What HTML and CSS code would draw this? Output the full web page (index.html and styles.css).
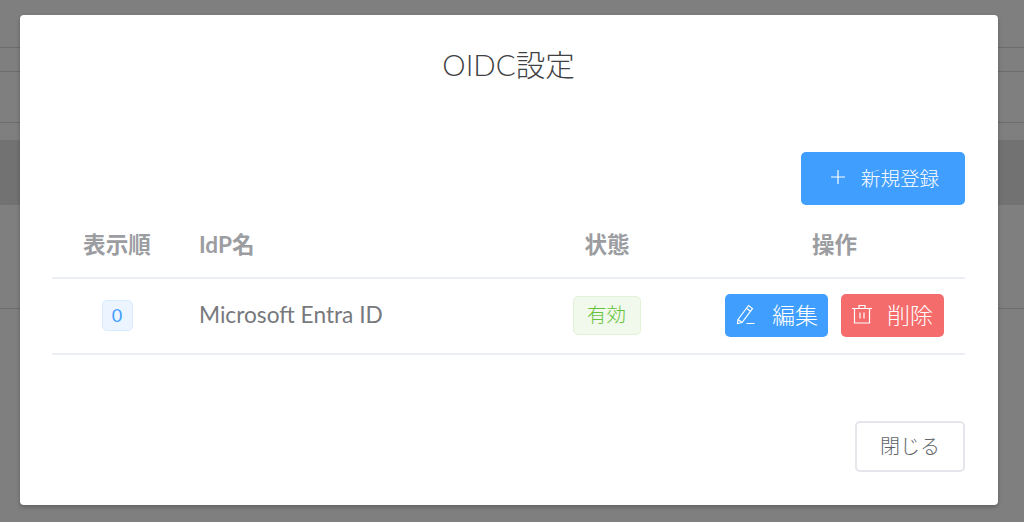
FILE: index.html
```html
<!DOCTYPE html>
<html lang="ja">
<head>
    <meta charset="UTF-8">
    <meta name="viewport" content="width=device-width, initial-scale=1.0">
    <title>OIDC設定</title>
    <link rel="stylesheet" href="styles.css">
</head>
<body>
    <div class="page-behind">
        <div class="behind-row behind-row-top"></div>
        <div class="behind-row behind-row-nav"></div>
        <div class="behind-row behind-row-tabs"></div>
        <div class="behind-band"></div>
        <div class="behind-row behind-row-body"></div>
    </div>

    <div class="overlay">
        <div class="dialog">
            <h1 class="dialog-title">OIDC設定</h1>

            <div class="toolbar">
                <button class="btn btn-primary btn-add">
                    <svg class="icon icon-plus" viewBox="0 0 16 16"><path d="M8 1v14M1 8h14"/></svg>
                    <span>新規登録</span>
                </button>
            </div>

            <table class="idp-table">
                <colgroup>
                    <col class="col-order">
                    <col class="col-name">
                    <col class="col-state">
                    <col class="col-ops">
                </colgroup>
                <thead>
                    <tr>
                        <th>表示順</th>
                        <th class="left">IdP名</th>
                        <th>状態</th>
                        <th>操作</th>
                    </tr>
                </thead>
                <tbody>
                    <tr>
                        <td><span class="badge">0</span></td>
                        <td class="left">Microsoft Entra ID</td>
                        <td><span class="tag">有効</span></td>
                        <td>
                            <div class="ops">
                                <button class="btn btn-primary btn-small">
                                    <svg class="icon icon-edit" viewBox="0 0 22 22"><path d="M3 16.5 13.5 2.5l4 3L7 19.5l-4.5 1zM11.5 5.2l4 3M3 16.5l4 3M11.5 20.5h8"/></svg>
                                    <span>編集</span>
                                </button>
                                <button class="btn btn-danger btn-small">
                                    <svg class="icon icon-trash" viewBox="0 0 20 20"><path d="M0 4.5h20M7 4.5V1.5h6v3M2.5 4.5v14.500h15v-14.500M8 8.500v6M12 8.500v6"/></svg>
                                    <span>削除</span>
                                </button>
                            </div>
                        </td>
                    </tr>
                </tbody>
            </table>

            <div class="dialog-footer">
                <button class="btn btn-close">閉じる</button>
            </div>
        </div>
    </div>
</body>
</html>
```

FILE: styles.css
```css
* {
    margin: 0;
    padding: 0;
    box-sizing: border-box;
}

html,
body {
    height: 522px;
    overflow: hidden;
}

body {
    background-color: #fff;
    color: #77797d;
    font-family: 'Lato', 'Noto Sans CJK JP', sans-serif;
    position: relative;
}

/* Page behind the dialog */
.behind-row {
    border-bottom: 1px solid #d8d8d8;
}

.behind-row-top {
    height: 48px;
}

.behind-row-nav {
    height: 24px;
}

.behind-row-tabs {
    height: 51px;
}

.behind-band {
    height: 65px;
    margin-top: 17px;
    background-color: #e4e4e4;
}

.behind-row-body {
    height: 104px;
}

/* Overlay */
.overlay {
    position: absolute;
    top: 0;
    left: 0;
    width: 100%;
    height: 100%;
    background-color: rgba(0, 0, 0, 0.5);
    padding: 15px 26px 17px 20px;
}

/* Dialog */
.dialog {
    background-color: #fff;
    border-radius: 4px;
    box-shadow: 0 2px 4px rgba(0, 0, 0, 0.25);
    height: 490px;
    padding: 0 33px 0 32px;
}

.dialog-title {
    font-size: 29.5px;
    font-weight: 300;
    line-height: 40px;
    color: #3f4144;
    text-align: center;
    padding-top: 30px;
    height: 70px;
}

.toolbar {
    display: flex;
    justify-content: flex-end;
    margin-top: 67px;
}

/* Buttons */
.btn {
    display: inline-flex;
    align-items: center;
    justify-content: center;
    border: none;
    border-radius: 5px;
    font-family: inherit;
    cursor: pointer;
}

.btn-primary {
    background-color: #409eff;
    color: #fff;
}

.btn-danger {
    background-color: #f56c6c;
    color: #fff;
}

.btn-add {
    width: 164px;
    height: 53px;
    font-size: 19.6px;
    font-weight: 300;
    gap: 15px;
    padding: 0 0 3px 3px;
}

.btn-small {
    width: 103px;
    height: 43px;
    font-size: 23px;
    font-weight: 300;
    gap: 15px;
    padding-bottom: 3px;
}

.btn-close {
    width: 110px;
    height: 51px;
    font-size: 20px;
    font-weight: 300;
    color: #606266;
    background-color: #fff;
    border: 2px solid #e4e6eb;
    padding-bottom: 2px;
}

.icon {
    fill: none;
    stroke: #fff;
    stroke-width: 1.2;
    flex-shrink: 0;
}

.icon-plus {
    width: 16px;
    height: 16px;
}

.icon-edit {
    width: 22px;
    height: 22px;
}

.icon-trash {
    width: 20px;
    height: 20px;
}

/* Table */
.idp-table {
    width: 913px;
    border-collapse: collapse;
    table-layout: fixed;
    margin-top: 10px;
}

.col-order {
    width: 130px;
}

.col-name {
    width: 328px;
}

.col-state {
    width: 194px;
}

.col-ops {
    width: 261px;
}

.idp-table th,
.idp-table td {
    text-align: center;
    border-bottom: 2px solid #ebeef5;
}

.idp-table th {
    height: 63px;
    font-size: 22.6px;
    font-weight: 700;
    color: #9b9da1;
    padding-bottom: 6px;
}

.idp-table td {
    height: 76px;
    font-size: 22.7px;
    padding-bottom: 2px;
}

.idp-table td.left {
    padding-bottom: 4px;
}

.idp-table .left {
    text-align: left;
    padding-left: 17px;
}

.ops {
    display: flex;
    justify-content: center;
    gap: 13px;
}

.badge {
    display: inline-block;
    width: 31px;
    height: 31px;
    line-height: 29px;
    font-size: 18px;
    color: #409eff;
    background-color: #ecf5ff;
    border: 1px solid #d9ecff;
    border-radius: 5px;
    vertical-align: middle;
}

.tag {
    display: inline-block;
    width: 68px;
    height: 39px;
    line-height: 35px;
    font-size: 19.5px;
    font-weight: 300;
    color: #67c23a;
    background-color: #f0f9eb;
    border: 1px solid #e1f3d8;
    border-radius: 5px;
    vertical-align: middle;
    margin-left: -1px;
}

.dialog-footer {
    display: flex;
    justify-content: flex-end;
    margin-top: 66px;
}
```
